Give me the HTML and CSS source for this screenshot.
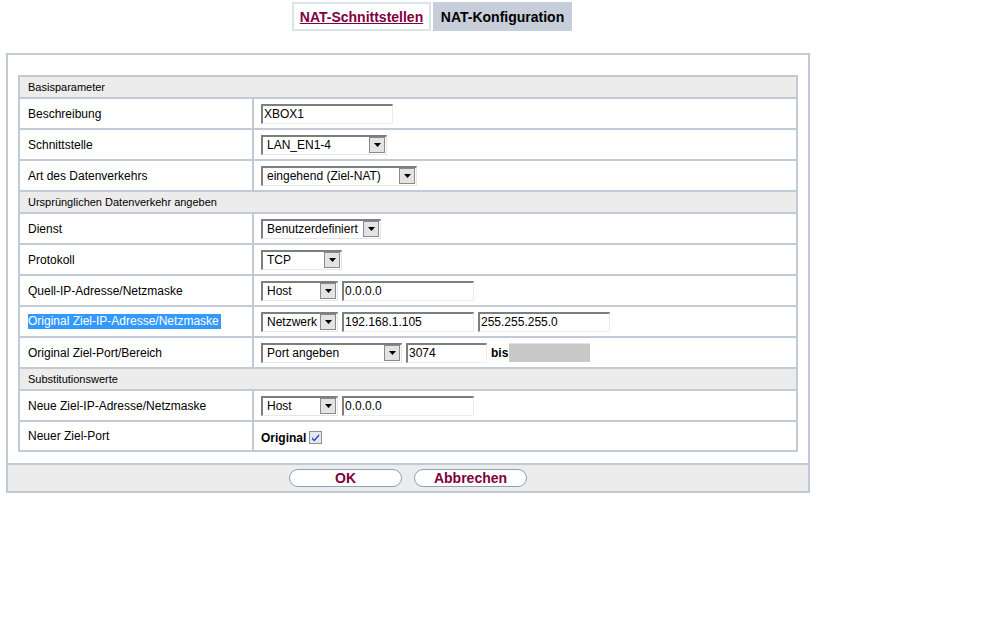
FILE: index.html
```html
<!DOCTYPE html>
<html lang="de">
<head>
  <meta charset="UTF-8">
  <title>NAT-Konfiguration</title>
  <link rel="stylesheet" href="styles.css">
</head>
<body>
  <div class="tabs">
    <a href="#" class="tab">NAT-Schnittstellen</a>
    <span class="tab tab-active">NAT-Konfiguration</span>
  </div>

  <div class="frame">
    <div class="frame-body">
      <table class="form-table">
        <colgroup>
          <col class="col-label">
          <col>
        </colgroup>
        <tr class="section"><td colspan="2">Basisparameter</td></tr>
        <tr>
          <td>Beschreibung</td>
          <td><div class="ctrls"><span class="txt w-ip">XBOX1</span></div></td>
        </tr>
        <tr>
          <td>Schnittstelle</td>
          <td><div class="ctrls"><span class="sel w-iface"><span class="sel-val">LAN_EN1-4</span><span class="sel-btn"><svg width="7" height="4" viewBox="0 0 7 4"><path d="M0 0h7L3.5 4z"/></svg></span></span></div></td>
        </tr>
        <tr>
          <td>Art des Datenverkehrs</td>
          <td><div class="ctrls"><span class="sel w-art"><span class="sel-val">eingehend (Ziel-NAT)</span><span class="sel-btn"><svg width="7" height="4" viewBox="0 0 7 4"><path d="M0 0h7L3.5 4z"/></svg></span></span></div></td>
        </tr>
        <tr class="section"><td colspan="2">Ursprünglichen Datenverkehr angeben</td></tr>
        <tr>
          <td>Dienst</td>
          <td><div class="ctrls"><span class="sel w-dienst"><span class="sel-val">Benutzerdefiniert</span><span class="sel-btn"><svg width="7" height="4" viewBox="0 0 7 4"><path d="M0 0h7L3.5 4z"/></svg></span></span></div></td>
        </tr>
        <tr>
          <td>Protokoll</td>
          <td><div class="ctrls"><span class="sel w-proto"><span class="sel-val">TCP</span><span class="sel-btn"><svg width="7" height="4" viewBox="0 0 7 4"><path d="M0 0h7L3.5 4z"/></svg></span></span></div></td>
        </tr>
        <tr>
          <td>Quell-IP-Adresse/Netzmaske</td>
          <td><div class="ctrls"><span class="sel w-mode"><span class="sel-val">Host</span><span class="sel-btn"><svg width="7" height="4" viewBox="0 0 7 4"><path d="M0 0h7L3.5 4z"/></svg></span></span><span class="txt w-ip">0.0.0.0</span></div></td>
        </tr>
        <tr>
          <td><span class="selected">Original Ziel-IP-Adresse/Netzmaske</span></td>
          <td><div class="ctrls"><span class="sel w-mode"><span class="sel-val">Netzwerk</span><span class="sel-btn"><svg width="7" height="4" viewBox="0 0 7 4"><path d="M0 0h7L3.5 4z"/></svg></span></span><span class="txt w-ip">192.168.1.105</span><span class="txt w-ip">255.255.255.0</span></div></td>
        </tr>
        <tr>
          <td>Original Ziel-Port/Bereich</td>
          <td><div class="ctrls"><span class="sel w-port"><span class="sel-val">Port angeben</span><span class="sel-btn"><svg width="7" height="4" viewBox="0 0 7 4"><path d="M0 0h7L3.5 4z"/></svg></span></span><span class="txt w-num">3074</span><b class="bis">bis</b><span class="txt-off w-num"></span></div></td>
        </tr>
        <tr class="section"><td colspan="2">Substitutionswerte</td></tr>
        <tr>
          <td>Neue Ziel-IP-Adresse/Netzmaske</td>
          <td><div class="ctrls"><span class="sel w-mode"><span class="sel-val">Host</span><span class="sel-btn"><svg width="7" height="4" viewBox="0 0 7 4"><path d="M0 0h7L3.5 4z"/></svg></span></span><span class="txt w-ip">0.0.0.0</span></div></td>
        </tr>
        <tr class="row-last">
          <td>Neuer Ziel-Port</td>
          <td>
            <div class="ctrls ctrls-check">
              <b>Original</b>
              <svg class="check" width="13" height="13" viewBox="0 0 13 13">
                <rect x="0.5" y="0.5" width="12" height="12" fill="#e6e8f0" stroke="#8e8f8f"/>
                <path d="M3 6.2l2.2 2.4 5-5.6v2l-5 5.6-2.2-2.4z" fill="#2b3cc2"/>
              </svg>
            </div>
          </td>
        </tr>
      </table>
    </div>
    <div class="frame-foot">
      <button class="btn">OK</button>
      <button class="btn">Abbrechen</button>
    </div>
  </div>
</body>
</html>
```

FILE: styles.css
```css
body {
  margin: 0;
  font-family: "Liberation Sans", Arial, sans-serif;
  font-size: 12px;
  color: #000;
  background-color: #fff;
}

.tabs {
  display: flex;
  gap: 2px;
  margin: 2px 0 0 292px;
}

.tab {
  box-sizing: border-box;
  width: 139px;
  height: 29px;
  display: flex;
  align-items: center;
  justify-content: center;
  font-size: 14px;
  font-weight: bold;
  color: #800040;
  border: 2px solid #dde3ea;
}

.tab-active {
  color: #000;
  background-color: #c5ced9;
  border-color: #c5ced9;
}

.frame {
  box-sizing: border-box;
  width: 804px;
  margin: 22px 0 0 6px;
  border: 2px solid #c1cbd6;
}

.frame-body {
  padding: 20px 10px 11px;
}

.form-table {
  width: 780px;
  border-collapse: collapse;
  border: 2px solid #c1cbd6;
}

.col-label {
  width: 234px;
}

.form-table td {
  border: 2px solid #c1cbd6;
  padding: 0 0 0 8px;
  height: 29px;
  vertical-align: middle;
}

.form-table td + td {
  padding-left: 7px;
}

.form-table .section td {
  height: 20px;
  font-size: 11px;
  background-color: #ececec;
}

.form-table .row-last td {
  height: 28px;
}

.selected {
  background-color: #3399ff;
  color: #fff;
  line-height: 15px;
  display: inline-block;
  padding-right: 2px;
}

.ctrls {
  display: flex;
  align-items: center;
  gap: 4px;
}

.txt,
.sel,
.txt-off {
  box-sizing: border-box;
  height: 20px;
  display: inline-flex;
  align-items: center;
  font-size: 12px;
  white-space: nowrap;
}

.txt {
  padding-left: 1px;
  border-top: 2px solid #7e7e7e;
  border-left: 2px solid #7e7e7e;
  border-right: 1px solid #ececec;
  border-bottom: 1px solid #ececec;
}

.txt-off {
  background-color: #c8c8c8;
  height: 19px;
  border-top: 1px solid #e2e2e2;
}

.sel {
  border-top: 2px solid #7e7e7e;
  border-left: 2px solid #7e7e7e;
  border-right: 1px solid #e6e6e6;
  border-bottom: 1px solid #e6e6e6;
}

.sel-val {
  flex: 1;
  padding-left: 4px;
  overflow: hidden;
}

.sel-btn {
  box-sizing: border-box;
  width: 16px;
  height: 16px;
  margin-right: 1px;
  display: flex;
  align-items: center;
  justify-content: center;
  background-color: #e3e3e3;
  border: 1px solid #8a8a8a;
}

.w-ip { width: 132px; }
.w-iface { width: 126px; }
.w-art { width: 156px; }
.w-dienst { width: 120px; }
.w-proto { width: 81px; }
.w-mode { width: 77px; }
.w-port { width: 141px; }
.w-num { width: 81px; }

.bis {
  margin: 0 -3px 0 0;
}

.ctrls-check {
  gap: 3px;
  padding-top: 3px;
}

.frame-foot {
  height: 26px;
  display: flex;
  align-items: center;
  justify-content: center;
  gap: 12px;
  border-top: 2px solid #c1cbd6;
  background-color: #ececec;
}

.btn {
  width: 113px;
  height: 18px;
  padding: 0;
  font-family: "Liberation Sans", Arial, sans-serif;
  font-size: 14px;
  font-weight: bold;
  color: #800040;
  background-color: #fff;
  border: 1px solid #8da0b5;
  border-radius: 9px;
}
```
